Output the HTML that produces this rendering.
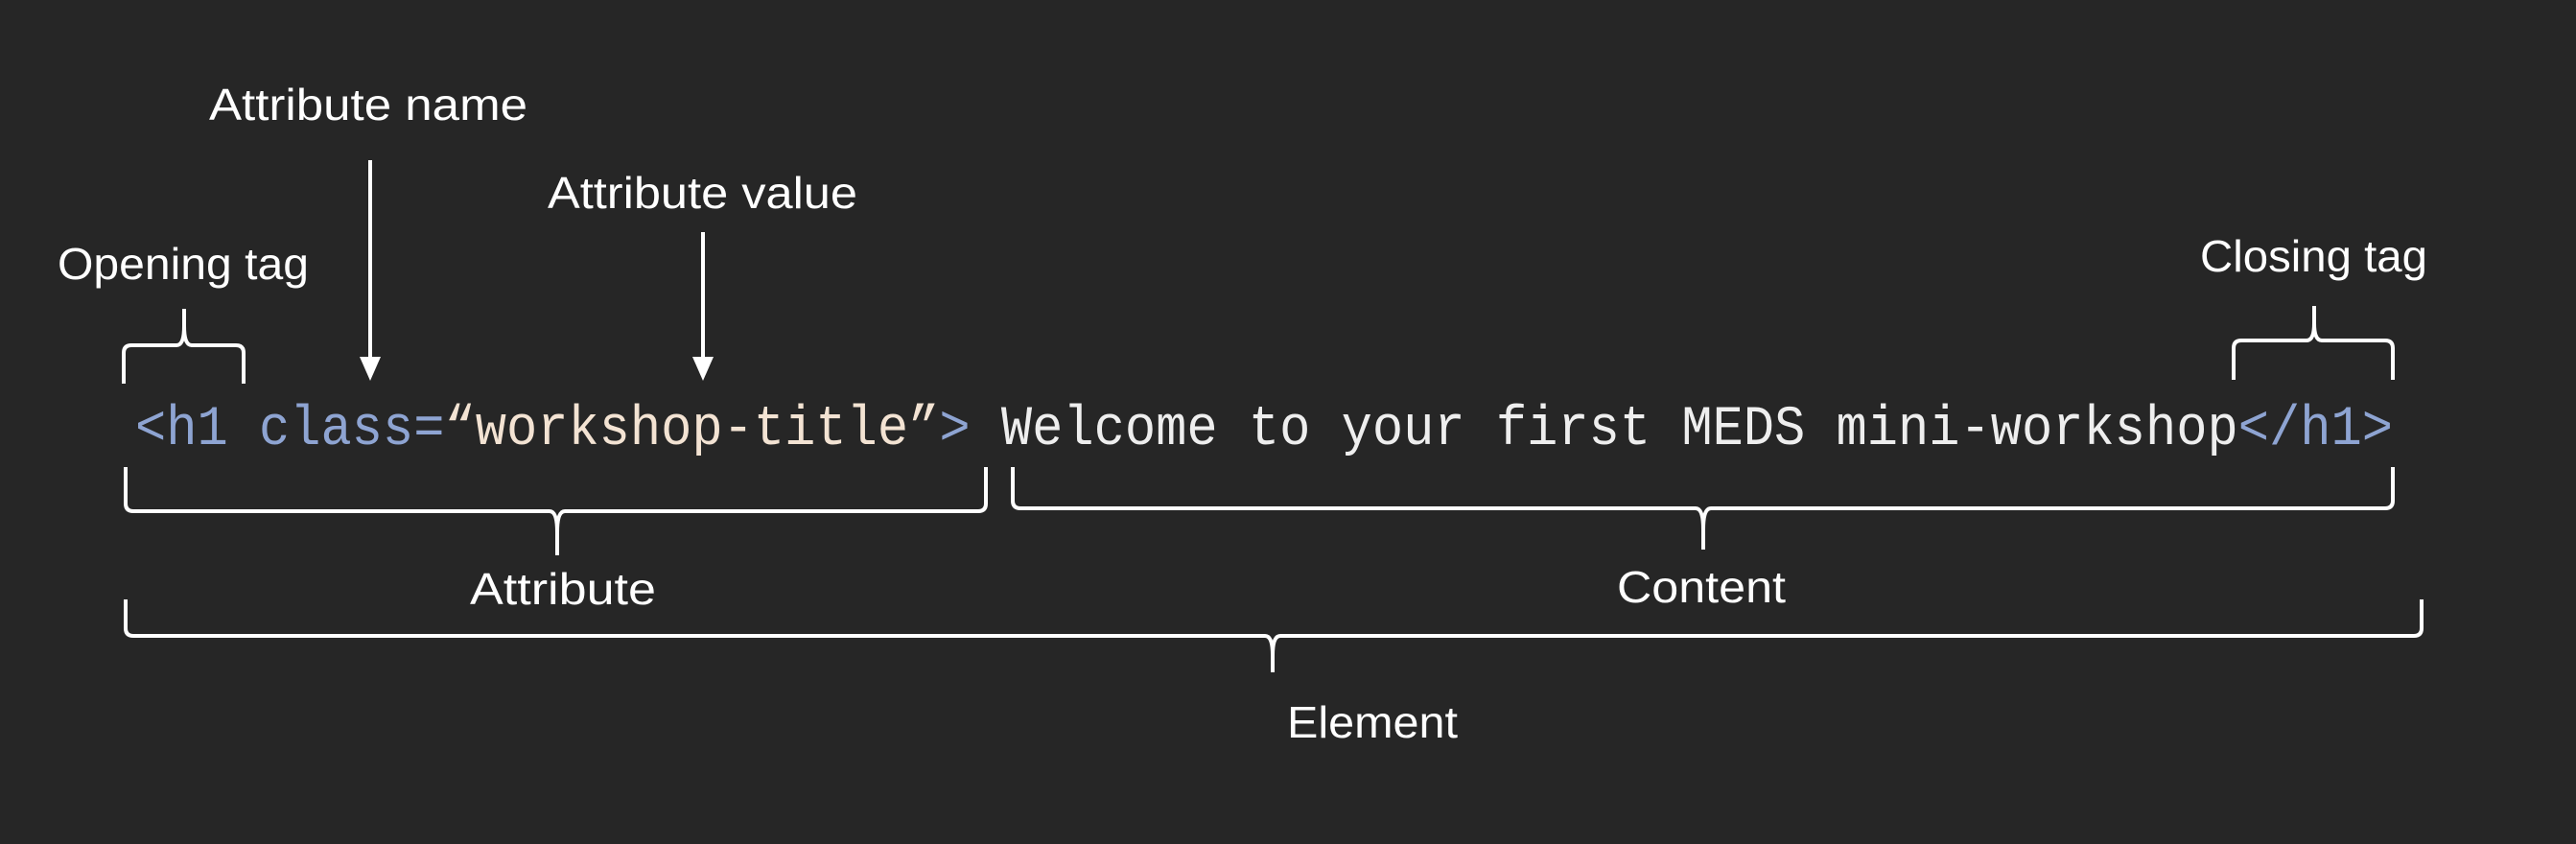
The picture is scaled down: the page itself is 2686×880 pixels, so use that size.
<!DOCTYPE html>
<html><head><meta charset="utf-8"><style>
html,body{margin:0;padding:0;background:#262626;}
svg{display:block}
.l{font-family:"Liberation Sans",sans-serif;fill:#fff;font-size:46px;}
.c{font-family:"Liberation Mono",monospace;font-size:58px;}
</style></head><body>
<svg width="2686" height="880" viewBox="0 0 2686 880" xmlns="http://www.w3.org/2000/svg">
<rect width="2686" height="880" fill="#262626"/>
<g class="l">
<text x="218" y="125" textLength="332" lengthAdjust="spacingAndGlyphs">Attribute name</text>
<text x="571" y="217" textLength="323" lengthAdjust="spacingAndGlyphs">Attribute value</text>
<text x="60" y="291" textLength="262" lengthAdjust="spacingAndGlyphs">Opening tag</text>
<text x="2294" y="283" textLength="237" lengthAdjust="spacingAndGlyphs">Closing tag</text>
<text x="490" y="630" textLength="194" lengthAdjust="spacingAndGlyphs">Attribute</text>
<text x="1686" y="628" textLength="176" lengthAdjust="spacingAndGlyphs">Content</text>
<text x="1342" y="769" textLength="178" lengthAdjust="spacingAndGlyphs">Element</text>
</g>
<text class="c" x="141" y="463" textLength="2354" lengthAdjust="spacingAndGlyphs" xml:space="preserve"><tspan fill="#8ea4d2">&lt;h1 class=</tspan><tspan fill="#f3e3d3">“workshop-title”</tspan><tspan fill="#8ea4d2">&gt;</tspan><tspan fill="#eeeeee"> Welcome to your first MEDS mini-workshop</tspan><tspan fill="#8ea4d2">&lt;/h1&gt;</tspan></text>
<g stroke="#fff" stroke-width="4" fill="none">
<line x1="386" y1="167" x2="386" y2="380"/>
<line x1="733" y1="242" x2="733" y2="380"/>
<path d="M129 400 L129 368 Q129 360 137 360 L184 360 Q192 360 192 340 L192 322 M192 340 Q192 360 200 360 L246 360 Q254 360 254 368 L254 400"/>
<path d="M2329 396 L2329 363 Q2329 355 2337 355 L2405 355 Q2413 355 2413 337 L2413 319 M2413 337 Q2413 355 2421 355 L2487 355 Q2495 355 2495 363 L2495 396"/>
<path d="M131 487 L131 525 Q131 533 139 533 L573 533 Q581 533 581 555 L581 579 M581 555 Q581 533 589 533 L1020 533 Q1028 533 1028 525 L1028 487"/>
<path d="M1056 487 L1056 522 Q1056 530 1064 530 L1768 530 Q1776 530 1776 552 L1776 573 M1776 552 Q1776 530 1784 530 L2487 530 Q2495 530 2495 522 L2495 487"/>
<path d="M131 625 L131 655 Q131 663 139 663 L1319 663 Q1327 663 1327 683 L1327 701 M1327 683 Q1327 663 1335 663 L2517 663 Q2525 663 2525 655 L2525 625"/>
</g>
<g fill="#fff">
<polygon points="375,372 397,372 386,397"/>
<polygon points="722,372 744,372 733,397"/>
</g>
</svg>
</body></html>
